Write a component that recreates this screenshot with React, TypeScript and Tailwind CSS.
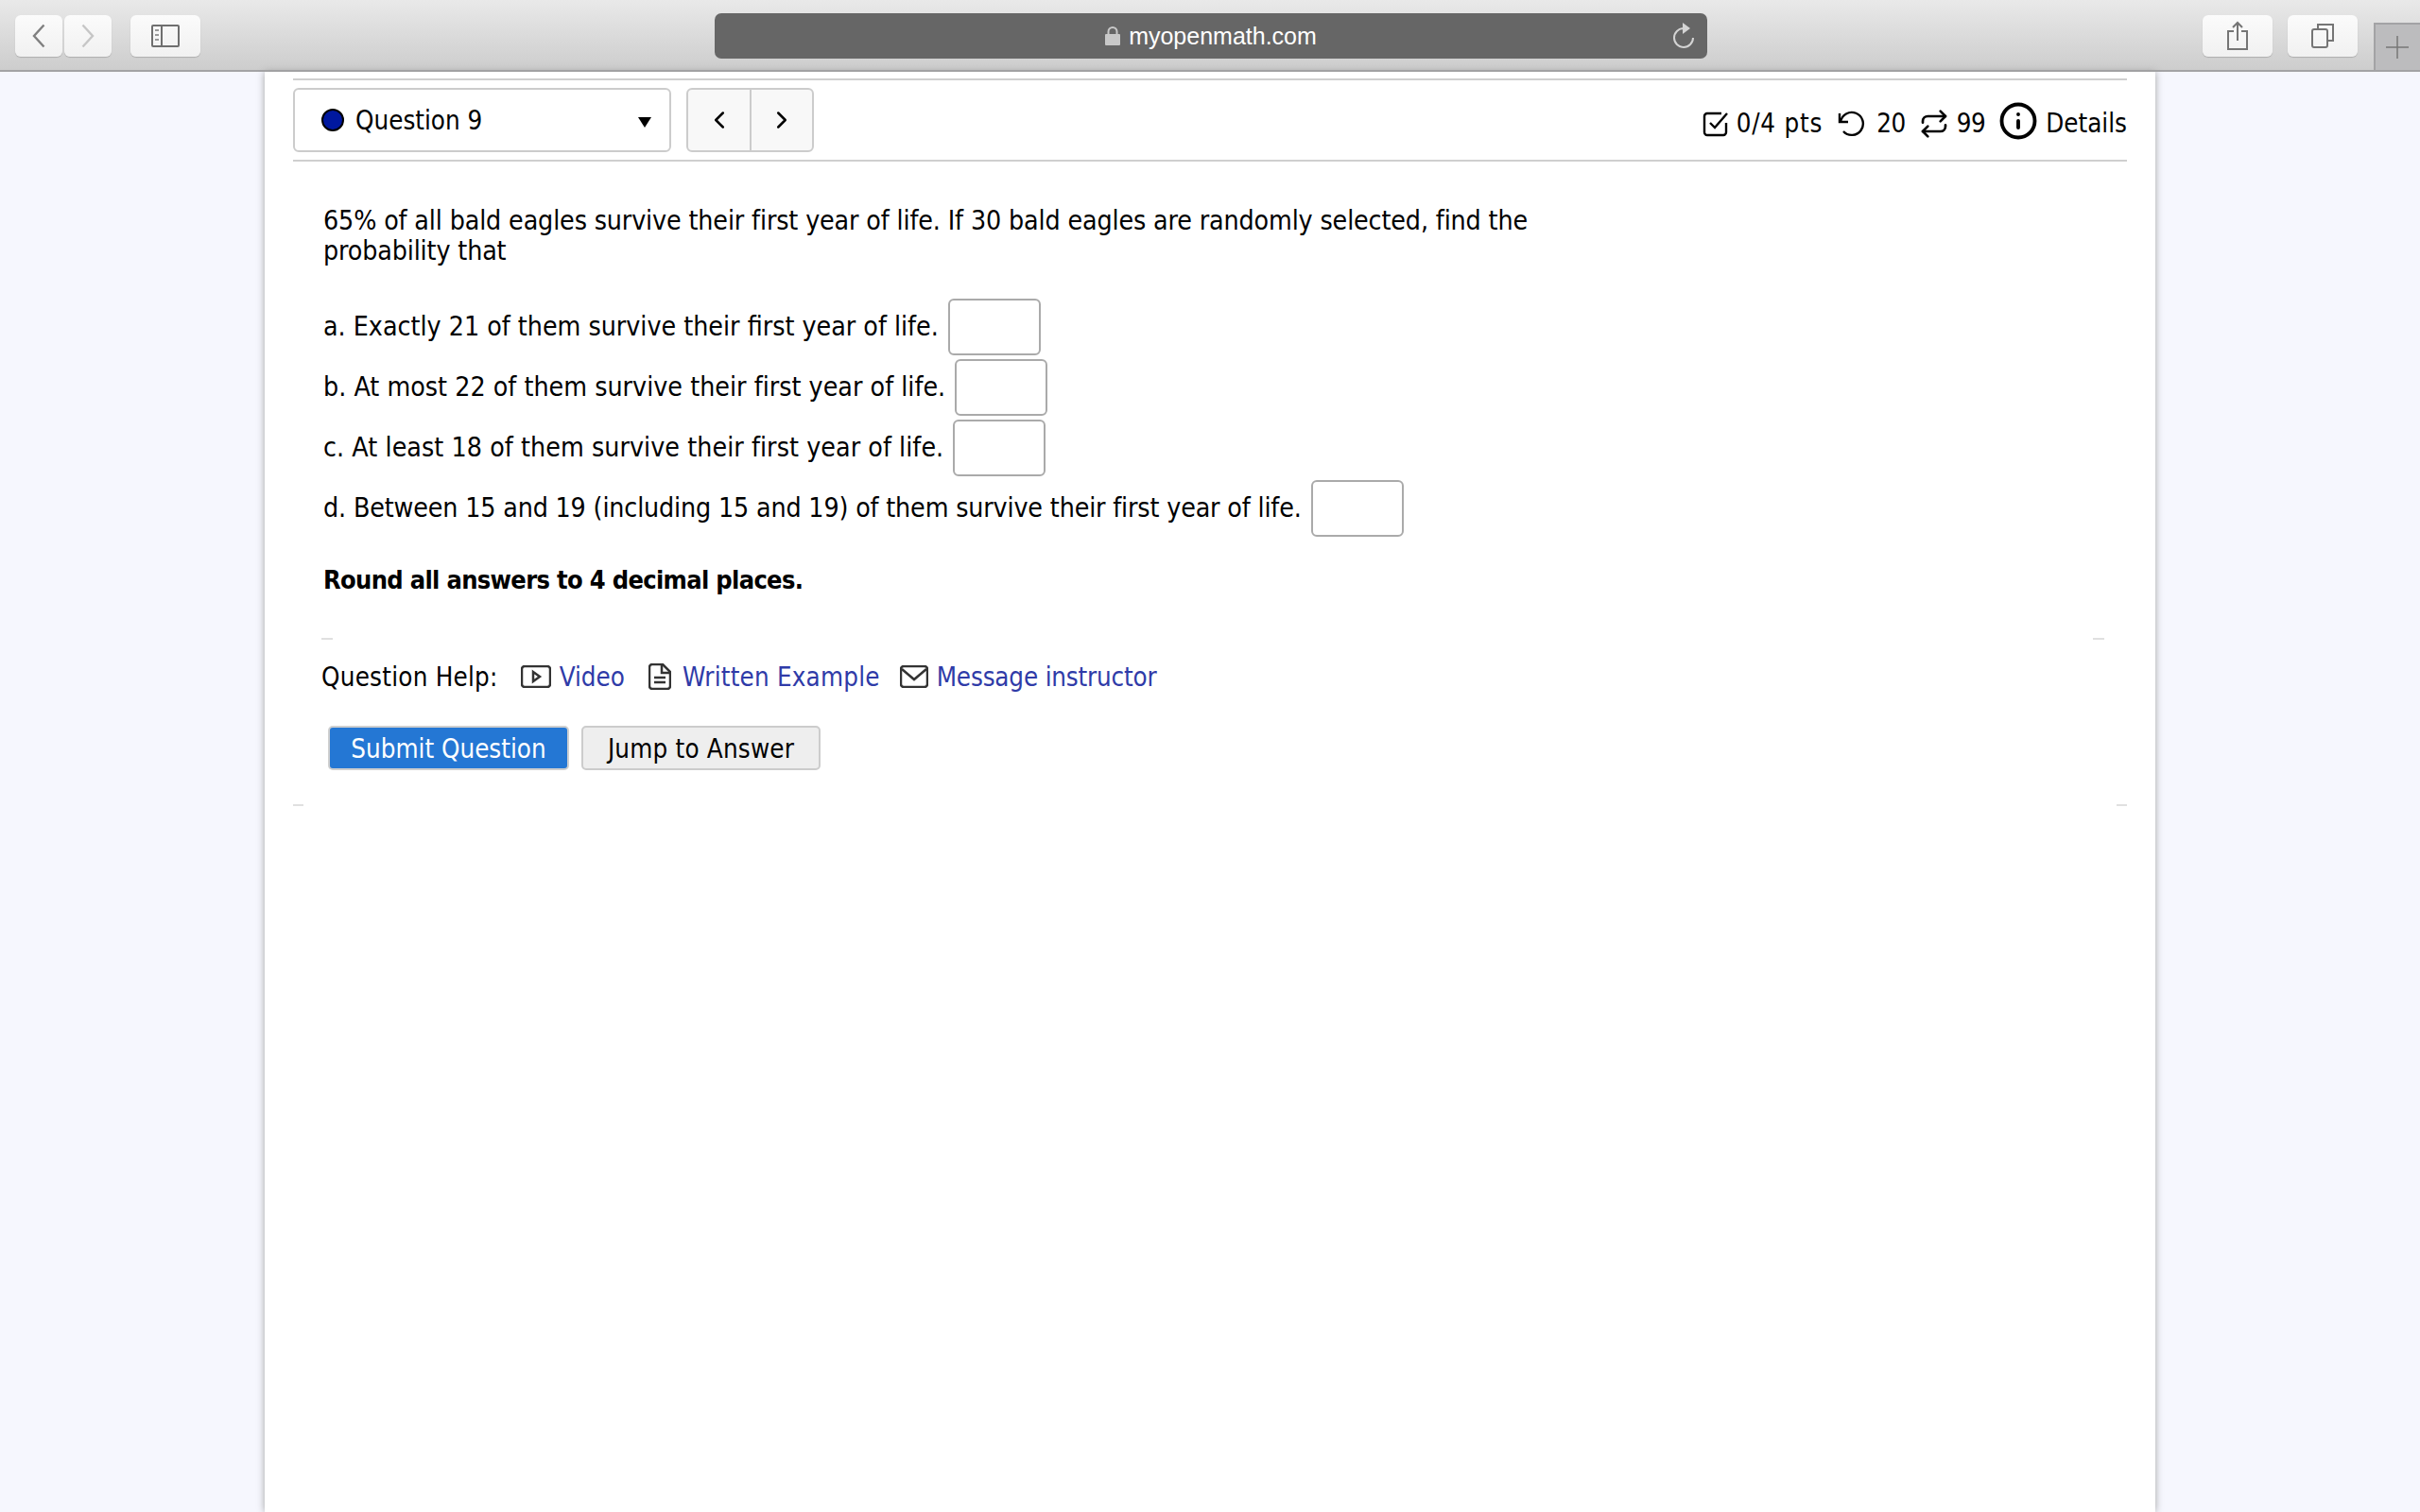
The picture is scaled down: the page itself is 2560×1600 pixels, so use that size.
import { ChevronLeft, ChevronRight, Info, Repeat } from 'lucide-react';

const parts = [
  { label: 'a. Exactly 21 of them survive their first year of life.', fit: '' },
  { label: 'b. At most 22 of them survive their first year of life.', fit: 'tracking-[0.02px]' },
  { label: 'c. At least 18 of them survive their first year of life.', fit: 'tracking-[0.06px]' },
  { label: 'd. Between 15 and 19 (including 15 and 19) of them survive their first year of life.', fit: 'tracking-[-0.15px]' },
];

const toolButton = 'h-[44px] rounded-[6px] bg-gradient-to-b from-[#fbfbfb] to-[#f1f1f1] shadow-[0_1px_1px_#adadad] flex items-center justify-center';

function Toolbar() {
  return (
    <header className="h-[76px] shrink-0 flex items-start border-b-2 border-[#a3a3a5] bg-gradient-to-b from-[#e9e9e9] to-[#cdcdcd] font-['Liberation_Sans',sans-serif]">
      {/* back / forward / sidebar */}
      <div className="flex ml-[16px] mt-[16px] gap-[2px]">
        <button className={`w-[50px] ${toolButton}`}>
          <svg width="16" height="26" viewBox="0 0 16 26" fill="none" stroke="#7f7f7f" strokeWidth="2.400"><path d="M13.500 1.500 3 13l10.500 11.500" /></svg>
        </button>
        <button className={`w-[50px] ${toolButton}`}>
          <svg width="16" height="26" viewBox="0 0 16 26" fill="none" stroke="#c6c6c6" strokeWidth="2.400"><path d="M2.500 1.500 13 13 2.500 24.500" /></svg>
        </button>
      </div>
      <button className={`ml-[20px] mt-[16px] w-[74px] ${toolButton}`}>
        <svg width="30" height="24" viewBox="0 0 30 24" fill="none" stroke="#6f6f6f" strokeWidth="2"><rect x="1" y="1" width="28" height="22" rx="1" /><path d="M11 1v22" /><path d="M4 6h4M4 11h4M4 16h4" stroke="#9a9a9a" /></svg>
      </button>

      {/* address bar */}
      <div className="relative ml-[544px] mt-[14px] w-[1050px] h-[48px] rounded-[7px] bg-[#666666] flex items-center justify-center text-white text-[25px]">
        <svg width="16" height="20" viewBox="0 0 16 20" className="mr-[9px]">
          <path d="M3.500 9V5.500a4.500 4.500 0 0 1 9 0V9" fill="none" stroke="#c8c8c8" strokeWidth="2" />
          <rect y="8" width="16" height="12" rx="1" fill="#c8c8c8" />
        </svg>
        <span className="mt-[1px]">myopenmath.com</span>
        <svg width="24" height="28" viewBox="0 0 24 28" fill="none" stroke="#d4d4d4" strokeWidth="2" className="absolute right-[13px] top-[9px]">
          <path d="M12 7A10 10 0 1 0 22 17" />
          <path d="M11 1l8 6-8 6z" fill="#d4d4d4" stroke="none" />
        </svg>
      </div>

      <div className="ml-auto flex items-start">
        <button className={`mt-[16px] w-[74px] ${toolButton}`}>
          <svg width="22" height="32" viewBox="0 0 22 32" fill="none" stroke="#757575" strokeWidth="2"><path d="M11 21V2M6 7l5-5 5 5" /><path d="M7 11H1v19h20V11h-6" /></svg>
        </button>
        <button className={`ml-[16px] mt-[16px] w-[74px] ${toolButton}`}>
          <svg width="24" height="26" viewBox="0 0 24 26" fill="none" stroke="#757575" strokeWidth="2"><rect x="1" y="6" width="16" height="19" rx="2" /><path d="M7 6V1h16v17h-6" /></svg>
        </button>
        <div className="ml-[17px] mt-[24px] w-[49px] h-[50px] bg-[#bcbcbe] border-l-2 border-t-2 border-[#a3a3a5] flex items-start pl-[11px] pt-[12px]">
          <svg width="24" height="24" viewBox="0 0 24 24" stroke="#777777" strokeWidth="1.500"><path d="M12 0v24M0 12h24" /></svg>
        </div>
      </div>
    </header>
  );
}

function QuestionBar() {
  return (
    <div className="flex items-center justify-between h-[88px] border-y-2 border-[#cfcfcf] mt-[7px] text-[27.5px]">
      <div className="flex items-center">
        <div className="w-[400px] h-[68px] rounded-[6px] border-2 border-[#cccccc] bg-white flex items-center pl-[28px] pr-[19px]">
          <span className="w-[24px] h-[24px] rounded-full bg-[#00189f] border-2 border-black mr-[12px]" />
          <span className="mt-[1px]">Question 9</span>
          <span className="ml-auto mt-[5px] border-x-[7px] border-x-transparent border-t-[11px] border-t-black" />
        </div>
        <div className="ml-[16px] flex w-[135px] h-[68px] rounded-[6px] border-2 border-[#cccccc] bg-[#f8f8f8]">
          <div className="w-[67px] flex items-center justify-center border-r-2 border-[#cccccc]"><ChevronLeft size={30} strokeWidth={2} /></div>
          <div className="flex-1 flex items-center justify-center"><ChevronRight size={30} strokeWidth={2} /></div>
        </div>
      </div>
      <div className="flex items-center mt-[7px]">
        <svg width="28" height="28" viewBox="0 0 28 28" fill="none" stroke="black" strokeWidth="2.400" className="mr-[8px]">
          <path d="M25 13v10a3 3 0 0 1-3 3H5a3 3 0 0 1-3-3V6a3 3 0 0 1 3-3h15" />
          <path d="M8 13l5 5L26 3" />
        </svg>
        <span className="tracking-[0.8px]">0/4 pts</span>
        <svg width="30" height="28" viewBox="0 0 30 28" fill="none" stroke="black" strokeWidth="2.400" className="ml-[16px] mr-[11px]">
          <path d="M2 3v9h9" />
          <path d="M3 12A12 12 0 1 1 6 22" />
        </svg>
        <span className="tracking-[-0.5px]">20</span>
        <Repeat size={32} strokeWidth={2} className="ml-[14px] mr-[8px]" />
        <span className="tracking-[-0.5px]">99</span>
        <Info size={42} strokeWidth={2.200} className="ml-[14px] mr-[8px] -mt-[6px]" />
        <span>Details</span>
      </div>
    </div>
  );
}

export default function App() {
  return (
    <div className="w-[2560px] h-[1600px] flex flex-col overflow-hidden bg-[#f6f7fe] text-black font-['DejaVu_Sans_Condensed','DejaVu_Sans',sans-serif]">
      <Toolbar />
      <main className="w-[2000px] ml-[280px] flex-1 bg-white shadow-[0_0_8px_#a0a0a0] px-[30px]">
        <QuestionBar />
        <section className="pl-[32px] pt-[47px] text-[28.3px] leading-[32px]">
          <p className="w-[1320px] tracking-[-0.13px]">65% of all bald eagles survive their first year of life. If 30 bald eagles are randomly selected, find the probability that</p>
          <div className="mt-[35px] flex flex-col gap-[6px]">
            {parts.map((p) => (
              <div key={p.label} className="flex items-center h-[58px]">
                <span className={`-mt-[1px] ${p.fit}`}>{p.label}</span>
                <span className="ml-[10px] w-[98px] h-[60px] rounded-[6px] border-2 border-[#aaaaaa] bg-white" />
              </div>
            ))}
          </div>
          <p className="mt-[31px] font-bold text-[27px] tracking-[-0.68px]">Round all answers to 4 decimal places.</p>
        </section>
        <div className="mt-[45px] ml-[30px] mr-[24px] h-[2px] flex justify-between"><span className="w-[12px] bg-[#e0e0e0]" /><span className="w-[12px] bg-[#e0e0e0]" /></div>
        <div className="flex items-center mt-[23px] ml-[30px] text-[27.5px] leading-[32px]">
          <span className="tracking-[0.24px]">Question Help:</span>
          <svg width="32" height="24" viewBox="0 0 32 24" fill="none" stroke="#333333" strokeWidth="2.500" className="ml-[24px] mr-[9px]"><rect x="1" y="1" width="30" height="22" rx="3" /><path d="M13 7l7 5-7 5z" /></svg>
          <a className="text-[#2f3ba8]">Video</a>
          <svg width="24" height="28" viewBox="0 0 24 28" fill="none" stroke="#333333" strokeWidth="2.500" className="ml-[25px] mr-[12px]"><path d="M15 1H4a3 3 0 0 0-3 3v20a3 3 0 0 0 3 3h16a3 3 0 0 0 3-3V9z" /><path d="M14 1v9h9M6 15h12M6 20h12" /></svg>
          <a className="text-[#2f3ba8] tracking-[0.2px]">Written Example</a>
          <svg width="30" height="24" viewBox="0 0 30 24" fill="none" stroke="#333333" strokeWidth="2.500" className="ml-[21px] mr-[9px]"><rect x="1" y="1" width="28" height="22" rx="3" /><path d="M2 4l13 11L28 4" /></svg>
          <a className="text-[#2f3ba8] tracking-[-0.17px]">Message instructor</a>
        </div>
        <div className="flex ml-[37px] mt-[36px] gap-[13px] text-[27.5px]">
          <button className="w-[255px] h-[47px] pt-[2px] rounded-[5px] border-2 border-[#cfcfcf] bg-[#2477d4] text-white">Submit Question</button>
          <button className="w-[253px] h-[47px] pt-[2px] rounded-[5px] border-2 border-[#cccccc] bg-[#eeeeee] tracking-[0.2px]">Jump to Answer</button>
        </div>
        <div className="mt-[36px] h-[2px] flex justify-between"><span className="w-[11px] bg-[#e0e0e0]" /><span className="w-[11px] bg-[#e0e0e0]" /></div>
      </main>
    </div>
  );
}
